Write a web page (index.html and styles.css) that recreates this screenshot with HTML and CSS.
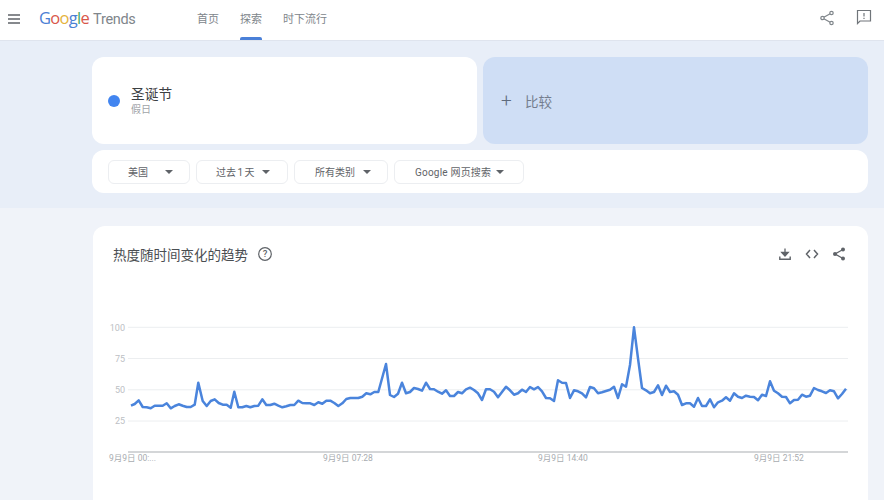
FILE: index.html
```html
<!DOCTYPE html>
<html lang="zh-CN">
<head>
<meta charset="utf-8">
<title>Google Trends</title>
<link rel="stylesheet" href="styles.css">
</head>
<body>
<header class="topbar">
  <svg class="menu" width="12" height="10" viewBox="0 0 12 10"><path d="M0 1h12M0 5h12M0 9h12" stroke="#5f6368" stroke-width="1.3" fill="none"/></svg>
  <div class="logo"><span class="logo-google"><span class="g-blue">G</span><span class="g-red">o</span><span class="g-yellow">o</span><span class="g-blue">g</span><span class="g-green">l</span><span class="g-red">e</span></span><span class="logo-word">Trends</span></div>
  <nav class="nav">
    <a class="nav-item">首页</a>
    <a class="nav-item active">探索</a>
    <a class="nav-item">时下流行</a>
  </nav>
  <div class="top-actions">
    <svg width="16" height="16" viewBox="0 0 16 16" class="top-share"><path d="M12.5 3 3.500 8l9 5" fill="none" stroke="#80868b" stroke-width="1.2"/><circle cx="12.500" cy="3" r="1.700" fill="#fff" stroke="#80868b" stroke-width="1.200"/><circle cx="3.500" cy="8" r="1.700" fill="#fff" stroke="#80868b" stroke-width="1.200"/><circle cx="12.500" cy="13" r="1.700" fill="#fff" stroke="#80868b" stroke-width="1.200"/></svg>
    <svg width="16" height="16" viewBox="0 0 16 16"><path d="M1.500 1.500h13v10.500H4l-2.500 2.500z" fill="none" stroke="#70757a" stroke-width="1.200"/><path d="M8 4v3.500M8 8.700v1.300" stroke="#70757a" stroke-width="1.200"/></svg>
  </div>
</header>

<section class="hero">
  <div class="terms">
    <div class="term-card">
      <span class="dot"></span>
      <div class="term-text">
        <div class="term-title">圣诞节</div>
        <div class="term-sub">假日</div>
      </div>
    </div>
    <div class="compare-card"><span class="plus">+</span><span class="compare-label">比较</span></div>
  </div>
  <div class="filters">
    <div class="chip chip-geo"><span>美国</span><i class="caret"></i></div>
    <div class="chip chip-time"><span class="tight">过去 1 天</span><i class="caret"></i></div>
    <div class="chip chip-cat"><span>所有类别</span><i class="caret"></i></div>
    <div class="chip chip-type"><span class="type-label">Google 网页搜索</span><i class="caret"></i></div>
  </div>
</section>

<main class="content">
  <section class="chart-card">
    <div class="chart-head">
      <h2 class="chart-title">热度随时间变化的趋势</h2>
      <svg class="help" width="16" height="16" viewBox="0 0 16 16"><circle cx="8" cy="8" r="6.300" fill="none" stroke="#5f6368" stroke-width="1.200"/><text x="8" y="11" text-anchor="middle" class="help-mark">?</text></svg>
      <div class="chart-actions">
        <svg width="14" height="14" viewBox="0 0 14 14"><path d="M7 1.500v6.500M3.800 5.500 7 9l3.200-3.500z" fill="#5f6368" stroke="#5f6368" stroke-width="1.300"/><path d="M1.800 9.500v2.700h10.400V9.500" fill="none" stroke="#5f6368" stroke-width="1.400"/></svg>
        <svg width="14" height="14" viewBox="0 0 14 14"><path d="M5 3 1.500 7 5 11M9 3l3.500 4L9 11" fill="none" stroke="#5f6368" stroke-width="1.500"/></svg>
        <svg width="14" height="14" viewBox="0 0 14 14"><path d="M11 2.500 3 7l8 4.500" fill="none" stroke="#5f6368" stroke-width="1.300"/><circle cx="11" cy="2.500" r="2" fill="#5f6368"/><circle cx="3" cy="7" r="2" fill="#5f6368"/><circle cx="11" cy="11.500" r="2" fill="#5f6368"/></svg>
      </div>
    </div>
    <svg class="chart" width="775" height="170" viewBox="93 310 775 170">
      <g class="grid">
        <path d="M128 327.300H848M128 358.500H848M128 389.800H848M128 421H848"/>
      </g>
      <path class="axis" d="M128 452H848"/>
      <g class="y-labels">
        <text x="125" y="331">100</text>
        <text x="125" y="362">75</text>
        <text x="125" y="393">50</text>
        <text x="125" y="424">25</text>
      </g>
      <g class="x-labels">
        <text x="109" y="461">9月9日 00:...</text>
        <text x="323" y="461">9月9日 07:28</text>
        <text x="538" y="461">9月9日 14:40</text>
        <text x="754" y="461">9月9日 21:52</text>
      </g>
      <polyline class="line" points="131,405.700 134.700,404 138.700,400.300 142.700,407 146.700,407.300 150.700,408.300 154.700,405.700 158.700,405.700 162.700,405.700 166.700,403.300 170.700,408.300 174.700,406 178.700,404.300 182.700,405.700 186.700,407 190.700,407 194.700,404.700 198.300,382.700 202.700,401 206.700,406 210.700,401 214.700,399.300 218.700,403 222.700,404.700 226.700,404.700 230.700,407.700 234.300,391.700 238.300,407.300 242.300,407.300 246.300,406 250.300,407.300 254.300,406 258.300,405.700 262.300,399.300 266.300,405 270.300,405 274.300,403.700 278.300,405.700 282.300,407.300 286.300,406.300 290.300,405 294.300,405 298.300,400.700 302.300,403 306.300,403.300 310.300,403.300 314.300,405 318.300,402.300 322.300,403.700 326.300,400.700 330.300,400.700 334.300,403 338.300,406 342.300,403.300 346.300,399 350.300,398 354.300,398 358.300,398 362.300,396.700 366.300,393.300 370.300,394.300 374.300,392 378.300,392 386,364 390,395 394,397 398,393.700 402,382.700 406,393.300 410,392 414,388 418,389 422,390.700 426,382.700 430,389 434,389.300 438,391.700 442,393.700 446,390.300 450,396 454,396 458,392 462,393.300 466,389.300 470,387.700 474,390 478,393.300 482,400 486,389.300 490,389.300 494,391.700 498,397.300 502,392 506,386.700 510,390.300 514,394.700 518,393.300 522,389.700 526,392 530,387 534,389.300 538,387 542,391.300 546,398 550,398.300 554,401 558,380.300 562,382.700 566,383 570,398 574,390.300 578,391.300 582,393.300 586,397.300 590,387 594,388.300 598,393.300 602,392.300 606,391 610,389.700 614,386.700 618,398 622,384.300 626,386.700 630,365 634,327.300 638,358.300 642,388 646,390.300 650,393.300 654,392 658,385.300 662,395 666,385.700 670,392 674,391.300 678,394.700 682,405 686,403.300 690,403.300 694,406.700 698,398 702,406 706,406 710,399.300 714,407.300 718,402.300 722,400.700 726,397.300 730,400.700 734,393.300 738,396.700 742,398 746,395.700 750,396.700 754,397 758,400.300 762,394.700 766,396 770,381.300 774,390.700 778,393.300 782,396.700 786,397 790,403.300 794,400 798,399.700 802,394.700 806,396.700 810,395.700 814,388 818,390 822,391.300 826,393 830,390.300 834,391.300 838,398.300 842,394 846,388.700"/>
    </svg>
  </section>
</main>
</body>
</html>
```
FILE: styles.css
```css
* { box-sizing: border-box; }
html, body { margin: 0; height: 500px; overflow: hidden; }
body {
  background: #f0f3f9;
  font-family: "Roboto", "Noto Sans CJK SC", sans-serif;
  color: #3c4043;
}

/* top bar */
.topbar {
  height: 41px;
  background: #fff;
  border-bottom: 1px solid #dfe4ee;
  display: flex;
  align-items: center;
  padding-left: 8px;
  padding-right: 12px;
}
.menu { flex: none; margin-top: -3px; }
.logo {
  margin-left: 19px;
  width: 97px;
  flex: none;
  display: flex;
  align-items: baseline;
  gap: 4px;
  white-space: nowrap;
  margin-top: -2px;
}
.logo-google {
  font: 400 16.500px/1 "Open Sans", sans-serif;
  letter-spacing: -0.7px;
}
.g-blue { color: #4c80d4; }
.g-red { color: #d9574a; }
.g-yellow { color: #e5b33c; }
.g-green { color: #4ba765; }
.logo-word {
  font: 400 14.500px/1 "Roboto", sans-serif;
  letter-spacing: -0.3px;
  color: #80868b;
}
.nav {
  display: flex;
  gap: 21px;
  margin-left: 61px;
  height: 40px;
}
.nav-item {
  position: relative;
  display: block;
  font-size: 11px;
  line-height: 40px;
  color: #80868b;
}
.nav-item.active::after {
  content: "";
  position: absolute;
  left: 0;
  right: 0;
  bottom: 0;
  height: 3px;
  background: #4a80d8;
  border-radius: 2px 2px 0 0;
}
.top-actions {
  margin-left: auto;
  display: flex;
  gap: 21px;
  margin-top: -5px;
}
.top-share { margin-top: 1px; }

/* search zone */
.hero {
  height: 167px;
  background: #e8eef8;
  padding: 16px 16px 0 92px;
}
.terms {
  display: grid;
  grid-template-columns: 385px 385px;
  gap: 6px;
  height: 87px;
}
.term-card {
  background: #fff;
  border-radius: 12px;
  display: flex;
  align-items: center;
  padding-left: 16px;
}
.dot {
  width: 12px;
  height: 12px;
  border-radius: 50%;
  background: #4285f0;
  flex: none;
}
.term-text { margin-left: 11px; }
.term-title { font-size: 13.700px; line-height: 17px; color: #3c4043; }
.term-sub { font-size: 10px; line-height: 12px; color: #a0a4a8; margin-top: 1px; }
.compare-card {
  background: #cfdef5;
  border-radius: 12px;
  display: flex;
  align-items: center;
  padding-left: 18px;
}
.plus { font: 300 19px/1 "Roboto", sans-serif; color: #5f6b7d; width: 24px; }
.compare-label { font-size: 13.500px; color: #747d8e; }

.filters {
  margin-top: 6px;
  height: 43px;
  width: 776px;
  background: #fff;
  border-radius: 12px;
  display: flex;
  align-items: center;
  gap: 6px;
  padding-left: 16px;
}
.chip {
  height: 24px;
  border: 1px solid #eceef1;
  border-radius: 6px;
  display: flex;
  align-items: center;
  font-size: 10px;
  color: #5f6368;
  white-space: nowrap;
}
.chip-geo { width: 82px; gap: 17px; padding-left: 19px; }
.chip-time { width: 92px; gap: 7px; padding-left: 19px; }
.chip-cat { width: 94px; gap: 8px; padding-left: 20px; }
.chip-type { width: 130px; gap: 5px; padding-left: 20px; }
.tight { word-spacing: -1px; }
.type-label { letter-spacing: 0.2px; }
.caret {
  width: 0;
  height: 0;
  border-left: 4px solid transparent;
  border-right: 4px solid transparent;
  border-top: 4px solid #5f6368;
  flex: none;
}

/* chart */
.content { padding: 18px 16px 0 93px; }
.chart-card {
  background: #fff;
  border-radius: 12px 12px 0 0;
  height: 274px;
}
.chart-head {
  display: flex;
  align-items: center;
  height: 56px;
  padding-left: 20px;
  padding-right: 22px;
}
.chart-title {
  margin: 0;
  font-size: 13.500px;
  font-weight: 400;
  color: #4a4e52;
}
.help { margin-left: 9px; }
.help-mark { font: 500 9.500px "Roboto", sans-serif; fill: #5f6368; }
.chart-actions { margin-left: auto; display: flex; gap: 13px; }
.chart { display: block; margin-top: 28px; }
.grid path { stroke: #eceef0; stroke-width: 1; fill: none; }
.axis { stroke: #c6c8cb; stroke-width: 1.500; fill: none; }
.y-labels text { font: 9px "Roboto", sans-serif; fill: #bcc0c4; text-anchor: end; }
.x-labels text { font: 8.500px "Roboto", "Noto Sans CJK SC", sans-serif; fill: #a8acb0; }
.line { fill: none; stroke: #4a84dc; stroke-width: 2.500; stroke-linejoin: round; }
```
